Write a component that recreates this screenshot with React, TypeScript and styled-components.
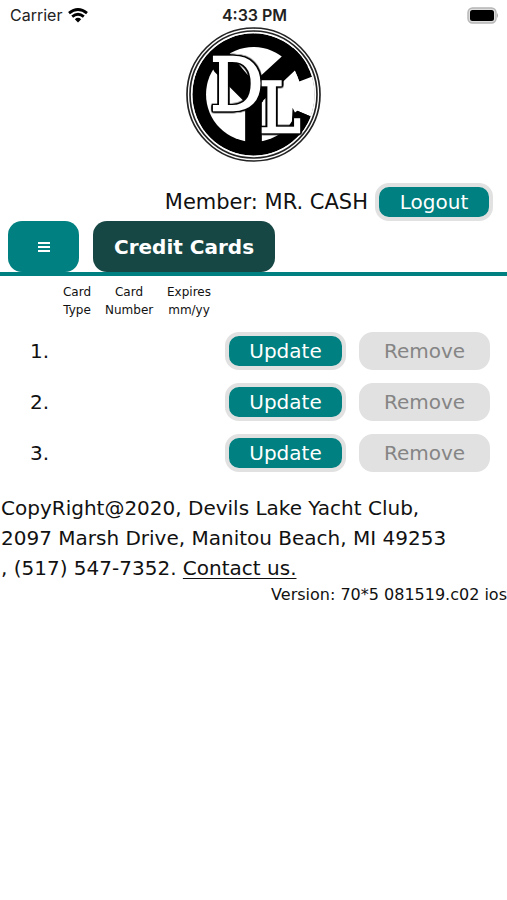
import React from "react";
import styled, { createGlobalStyle } from "styled-components";

const TEAL = "#008080";

const GlobalStyle = createGlobalStyle`
  *, *::before, *::after { box-sizing: border-box; }
  body {
    margin: 0;
    background: #fff;
    color: #111;
    font-family: "DejaVu Sans", Verdana, sans-serif;
    font-size: 20px;
  }
  button { font: inherit; cursor: pointer; }
`;

const StatusBar = styled.div`
  display: grid;
  grid-template-columns: 1fr auto 1fr;
  align-items: center;
  height: 27px;
  padding: 3px 8px 0 10px;
  font-family: Inter, sans-serif;
  font-size: 16px;
  color: #222;
`;

const Carrier = styled.span`
  display: flex;
  align-items: center;
  gap: 6px;
`;

const Clock = styled.time`
  font-weight: 600;
`;

const BatteryIcon = styled.svg`
  justify-self: end;
`;

const Header = styled.header`
  display: flex;
  flex-direction: column;
`;

const Logo = styled.svg`
  align-self: center;
  width: 135px;
  height: 135px;
`;

const Monogram = styled.g`
  font-family: "DejaVu Serif Condensed", "Liberation Serif", serif;
  fill: #fff;
  stroke: #fff;
  stroke-width: 7px;
  filter: drop-shadow(4px 0 0 #000) drop-shadow(-4px 0 0 #000) drop-shadow(0 4px 0 #000) drop-shadow(0 -4px 0 #000);
`;

const MemberRow = styled.div`
  display: flex;
  justify-content: flex-end;
  align-items: center;
  gap: 7px;
  margin-top: 21px;
  padding-right: 14px;
`;

const MemberName = styled.span`
  font-size: 21px;
`;

const ActionButton = styled.button<{ $width: number }>`
  width: ${(p) => p.$width}px;
  height: 38px;
  padding: 0;
  border: 4px solid #e1e1e1;
  border-radius: 14px;
  background: ${TEAL};
  color: #fff;
  &:disabled {
    background: #e1e1e1;
    color: #858585;
    cursor: default;
  }
`;

const TabBar = styled.nav`
  display: flex;
  gap: 14px;
  padding: 0 8px;
  border-bottom: 4px solid ${TEAL};
`;

const MenuButton = styled.button`
  display: flex;
  align-items: center;
  justify-content: center;
  width: 71px;
  height: 51px;
  border: 0;
  border-radius: 14px;
  background: ${TEAL};
`;

const Title = styled.h1`
  margin: 0;
  padding: 1px 21px 0;
  border-radius: 14px;
  background: #174744;
  color: #fff;
  font-size: 20px;
  font-weight: 700;
  line-height: 50px;
`;

const CardTable = styled.table`
  width: 100%;
  margin-top: 7px;
  table-layout: fixed;
  border-collapse: collapse;
  th {
    height: 42px;
    padding: 0;
    font-size: 12px;
    font-weight: 400;
    line-height: 18px;
    text-align: center;
    vertical-align: top;
  }
  td {
    height: 51px;
    padding: 0;
  }
`;

const Col = styled.col<{ $width?: number }>`
  width: ${(p) => (p.$width ? `${p.$width}px` : "auto")};
`;

const Index = styled.td`
  text-align: right;
`;

const Actions = styled.div`
  display: flex;
  justify-content: flex-end;
  gap: 13px;
  padding-right: 17px;
`;

const Footer = styled.footer`
  margin-top: 15px;
`;

const Address = styled.address`
  padding-left: 1px;
  font-style: normal;
  line-height: 30px;
  a {
    color: inherit;
    text-decoration-thickness: 1px;
    text-underline-offset: 3px;
  }
`;

const Version = styled.p`
  margin: 0;
  font-size: 16px;
  line-height: 24px;
  text-align: right;
`;

function ClubLogo() {
  return (
    <Logo viewBox="19 20 404 404" role="img" aria-label="Devils Lake Yacht Club">
      <clipPath id="disc">
        <circle cx="221" cy="222" r="183" />
      </clipPath>
      <circle cx="221" cy="222" r="199" fill="#fff" stroke="#222" strokeWidth="5" />
      <circle cx="221" cy="222" r="190" fill="none" stroke="#222" strokeWidth="5" />
      <g clipPath="url(#disc)">
        <circle cx="221" cy="222" r="183" fill="#000" />
        <circle cx="221" cy="222" r="142" fill="#fff" />
        <path d="M80 110 L130 75 L222 185 L308 106 L350 75 L400 130 L346 150 L246 246 V390 H196 V246 L104 154Z" fill="#000" />
        <path d="M345 150 L358 183 L410 163 V295 L352 271 L310 330 L250 270 L250 240Z" fill="#fff" />
        <path d="M338 262 L345 276 L352 271 L410 295 L350 350 L282 352 Q317 336 336 302Z" fill="#000" />
      </g>
      <Monogram>
        <text x="92" y="269" fontSize="218">D</text>
        <text x="239" y="334" fontSize="205">L</text>
      </Monogram>
    </Logo>
  );
}

export default function App() {
  return (
    <>
      <GlobalStyle />
      <StatusBar>
        <Carrier>
          Carrier
          <svg width="20" height="15" viewBox="0 0 20 15" aria-hidden="true">
            <g fill="none" stroke="#000" strokeWidth="2.8">
              <path d="M1 5.2 Q10 -2.2 19 5.2" />
              <path d="M4.2 8.7 Q10 3.9 15.8 8.7" />
            </g>
            <path d="M6.8 11.2 Q10 8.5 13.2 11.2 L10 14.6Z" fill="#000" />
          </svg>
        </Carrier>
        <Clock>4:33 PM</Clock>
        <BatteryIcon width="33" height="17" viewBox="0 0 33 17" aria-hidden="true">
          <rect x="2" y="1" width="28" height="15" rx="4.5" fill="#ddd" stroke="#b5b5b5" strokeWidth="1.4" />
          <rect x="4" y="3" width="24" height="11" rx="2.5" fill="#000" />
          <path d="M31 6 Q33 8.5 31 11Z" fill="#aaa" />
        </BatteryIcon>
      </StatusBar>
      <Header>
        <ClubLogo />
        <MemberRow>
          <MemberName>Member: MR. CASH</MemberName>
          <ActionButton $width={118} type="button">Logout</ActionButton>
        </MemberRow>
        <TabBar>
          <MenuButton type="button" aria-label="Menu">
            <svg width="14" height="12" viewBox="0 0 14 12" aria-hidden="true">
              <path d="M1 2H13M1 6H13M1 10H13" stroke="#fff" strokeWidth="2" />
            </svg>
          </MenuButton>
          <Title>Credit Cards</Title>
        </TabBar>
      </Header>
      <main>
        <CardTable>
          <colgroup>
            <Col $width={49} />
            <Col $width={56} />
            <Col $width={48} />
            <Col $width={72} />
            <Col />
          </colgroup>
          <thead>
            <tr>
              <th aria-label="Row" />
              <th scope="col">Card<br />Type</th>
              <th scope="col">Card<br />Number</th>
              <th scope="col">Expires<br />mm/yy</th>
              <th aria-label="Actions" />
            </tr>
          </thead>
          <tbody>
            {[1, 2, 3].map((n) => (
              <tr key={n}>
                <Index>{n}.</Index>
                <td />
                <td />
                <td />
                <td>
                  <Actions>
                    <ActionButton $width={121} type="button">Update</ActionButton>
                    <ActionButton $width={131} type="button" disabled>Remove</ActionButton>
                  </Actions>
                </td>
              </tr>
            ))}
          </tbody>
        </CardTable>
      </main>
      <Footer>
        <Address>
          CopyRight@2020, Devils Lake Yacht Club,<br />
          2097 Marsh Drive, Manitou Beach, MI 49253<br />
          , (517) 547-7352. <a href="#contact">Contact us.</a>
        </Address>
        <Version>Version: 70*5 081519.c02 ios</Version>
      </Footer>
    </>
  );
}
